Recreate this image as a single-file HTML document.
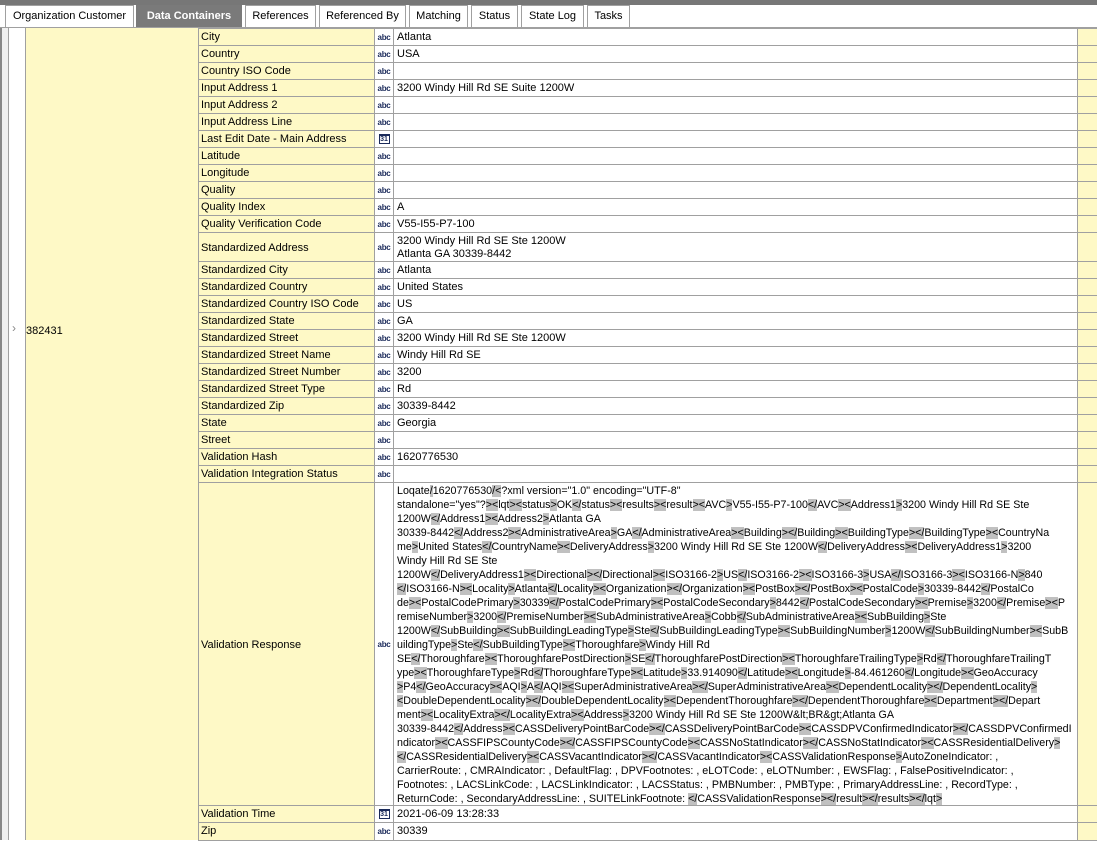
<!DOCTYPE html>
<html><head><meta charset="utf-8"><style>
*{margin:0;padding:0;box-sizing:border-box}
body{width:1097px;height:840px;overflow:hidden;background:#fff;font-family:"Liberation Sans",sans-serif;font-size:11px;color:#000;position:relative}
.topbar{position:absolute;left:0;top:0;width:1097px;height:5px;background:#777}
.tab{position:absolute;top:5px;height:22px;border:1px solid #a0a0a0;border-bottom:none;background:#fff;font-size:11px;line-height:20px;text-align:center;color:#000}
.tab.act{background:#7a7a7a;color:#fff;font-weight:bold;border-color:#7a7a7a}
.tabline{position:absolute;left:0;top:27px;width:1097px;height:1px;background:#a0a0a0}
.a{position:absolute}
.lbl{position:absolute;left:198px;width:176px;background:#fef9c6;border:1px solid #a0a0a0;border-right:none;padding-left:2px;padding-top:1px;line-height:15px;white-space:nowrap;overflow:hidden}
.ic{position:absolute;left:374px;width:19px;background:#fff;border:1px solid #a0a0a0;border-right:none;display:flex;align-items:center;justify-content:center}
.val{position:absolute;left:393px;width:684px;background:#fff;border:1px solid #a0a0a0;border-right:none;padding-left:3px;padding-top:1px;line-height:15px;white-space:nowrap;overflow:hidden}
.ry{position:absolute;left:1077px;width:20px;background:#fef9c6;border:1px solid #a0a0a0;border-right:none}
.abc{font-size:8px;font-weight:bold;color:#1a2a5a;letter-spacing:-0.3px;font-family:"Liberation Sans",sans-serif}
.cal{width:11px;height:10px;border:1px solid #1a2a5a;border-top-width:2px;font-size:7px;line-height:7px;text-align:center;color:#1a2a5a;font-weight:bold}
.vr{line-height:14px;padding-top:1px;font-size:10.7px}
.h{background:#c0c0c0}
</style></head><body>
<div class="topbar"></div>
<div class="tab" style="left:5px;width:129px">Organization Customer</div>
<div class="tab act" style="left:136px;width:106px">Data Containers</div>
<div class="tab" style="left:245px;width:71px">References</div>
<div class="tab" style="left:319px;width:87px">Referenced By</div>
<div class="tab" style="left:409px;width:59px">Matching</div>
<div class="tab" style="left:471px;width:47px">Status</div>
<div class="tab" style="left:521px;width:63px">State Log</div>
<div class="tab" style="left:587px;width:43px">Tasks</div>
<div class="tabline"></div>
<div class="a" style="left:0;top:28px;width:9px;height:812px;background:#f0f0f0;border-left:2px solid #888"></div>
<div class="a" style="left:8px;top:28px;width:18px;height:812px;background:#fff;border-left:1px solid #a0a0a0;border-right:1px solid #a0a0a0"></div>
<div class="a" style="left:12px;top:321px;font-size:12px;color:#888">&#x203A;</div>
<div class="a" style="left:26px;top:324px;width:172px;height:1px"></div>
<div class="a" style="left:26px;top:28px;width:172px;height:812px;background:#fef9c6"></div>
<div class="a" style="left:26px;top:324px;line-height:14px">382431</div>
<div id="rows"></div>
<script>
var rows=[["City","a","Atlanta",28,17],["Country","a","USA",45,17],["Country ISO Code","a","",62,17],["Input Address 1","a","3200 Windy Hill Rd SE Suite 1200W",79,17],["Input Address 2","a","",96,17],["Input Address Line","a","",113,17],["Last Edit Date - Main Address","c","",130,17],["Latitude","a","",147,17],["Longitude","a","",164,17],["Quality","a","",181,17],["Quality Index","a","A",198,17],["Quality Verification Code","a","V55-I55-P7-100",215,17],["Standardized Address","a","3200 Windy Hill Rd SE Ste 1200W<br>Atlanta GA 30339-8442",232,29],["Standardized City","a","Atlanta",261,17],["Standardized Country","a","United States",278,17],["Standardized Country ISO Code","a","US",295,17],["Standardized State","a","GA",312,17],["Standardized Street","a","3200 Windy Hill Rd SE Ste 1200W",329,17],["Standardized Street Name","a","Windy Hill Rd SE",346,17],["Standardized Street Number","a","3200",363,17],["Standardized Street Type","a","Rd",380,17],["Standardized Zip","a","30339-8442",397,17],["State","a","Georgia",414,17],["Street","a","",431,17],["Validation Hash","a","1620776530",448,17],["Validation Integration Status","a","",465,17],["Validation Response","a","VR",482,323],["Validation Time","c","2021-06-09 13:28:33",805,17],["Zip","a","30339",822,18]];
var vr=['Loqate/1620776530/<?xml version="1.0" encoding="UTF-8"',
'standalone="yes"?><lqt><status>OK</status><results><result><AVC>V55-I55-P7-100</AVC><Address1>3200 Windy Hill Rd SE Ste',
'1200W</Address1><Address2>Atlanta GA',
'30339-8442</Address2><AdministrativeArea>GA</AdministrativeArea><Building></Building><BuildingType></BuildingType><CountryNa',
'me>United States</CountryName><DeliveryAddress>3200 Windy Hill Rd SE Ste 1200W</DeliveryAddress><DeliveryAddress1>3200',
'Windy Hill Rd SE Ste',
'1200W</DeliveryAddress1><Directional></Directional><ISO3166-2>US</ISO3166-2><ISO3166-3>USA</ISO3166-3><ISO3166-N>840',
'</ISO3166-N><Locality>Atlanta</Locality><Organization></Organization><PostBox></PostBox><PostalCode>30339-8442</PostalCo',
'de><PostalCodePrimary>30339</PostalCodePrimary><PostalCodeSecondary>8442</PostalCodeSecondary><Premise>3200</Premise><P',
'remiseNumber>3200</PremiseNumber><SubAdministrativeArea>Cobb</SubAdministrativeArea><SubBuilding>Ste',
'1200W</SubBuilding><SubBuildingLeadingType>Ste</SubBuildingLeadingType><SubBuildingNumber>1200W</SubBuildingNumber><SubB',
'uildingType>Ste</SubBuildingType><Thoroughfare>Windy Hill Rd',
'SE</Thoroughfare><ThoroughfarePostDirection>SE</ThoroughfarePostDirection><ThoroughfareTrailingType>Rd</ThoroughfareTrailingT',
'ype><ThoroughfareType>Rd</ThoroughfareType><Latitude>33.914090</Latitude><Longitude>-84.461260</Longitude><GeoAccuracy',
'>P4</GeoAccuracy><AQI>A</AQI><SuperAdministrativeArea></SuperAdministrativeArea><DependentLocality></DependentLocality>',
'<DoubleDependentLocality></DoubleDependentLocality><DependentThoroughfare></DependentThoroughfare><Department></Depart',
'ment><LocalityExtra></LocalityExtra><Address>3200 Windy Hill Rd SE Ste 1200W&lt;BR&gt;Atlanta GA',
'30339-8442</Address><CASSDeliveryPointBarCode></CASSDeliveryPointBarCode><CASSDPVConfirmedIndicator></CASSDPVConfirmedI',
'ndicator><CASSFIPSCountyCode></CASSFIPSCountyCode><CASSNoStatIndicator></CASSNoStatIndicator><CASSResidentialDelivery>',
'</CASSResidentialDelivery><CASSVacantIndicator></CASSVacantIndicator><CASSValidationResponse>AutoZoneIndicator: ,',
'CarrierRoute: , CMRAIndicator: , DefaultFlag: , DPVFootnotes: , eLOTCode: , eLOTNumber: , EWSFlag: , FalsePositiveIndicator: ,',
'Footnotes: , LACSLinkCode: , LACSLinkIndicator: , LACSStatus: , PMBNumber: , PMBType: , PrimaryAddressLine: , RecordType: ,',
'ReturnCode: , SecondaryAddressLine: , SUITELinkFootnote: </CASSValidationResponse></result></results></lqt>'];
function esc(s){return s.replace(/&/g,'&amp;').replace(/</g,'&lt;').replace(/>/g,'&gt;');}
function hl(s,i){
  var out='';var re=/(>?<\/?|>)/g;var last=0,m;
  if(i==0){return 'Loqate<span class="h">/</span>1620776530<span class="h">/</span><span class="h">&lt;</span>?xml version="1.0" encoding="UTF-8"';}
  while((m=re.exec(s))){out+=esc(s.slice(last,m.index))+'<span class="h">'+esc(m[0])+'</span>';last=m.index+m[0].length;}
  return out+esc(s.slice(last));
}
var h='';
rows.forEach(function(r){
  var t=r[3],ht=r[4];
  var icon=r[1]=='a'?'<span class="abc">abc</span>':'<div class="cal">31</div>';
  var v=r[2]=='VR'?'<div class="vr">'+vr.map(hl).join('<br>')+'</div>':r[2];
  var lp=ht>20?'padding-top:'+(Math.round(ht/2)-7)+'px;':'';
  h+='<div class="lbl" style="top:'+t+'px;height:'+(ht+1)+'px;'+lp+'">'+r[0]+'</div>';
  h+='<div class="ic" style="top:'+t+'px;height:'+(ht+1)+'px">'+icon+'</div>';
  h+='<div class="val" style="top:'+t+'px;height:'+(ht+1)+'px;'+(ht==29?'line-height:13px;padding-top:2px':'')+(ht>100?'padding-top:0;':'')+'">'+v+'</div>';
  h+='<div class="ry" style="top:'+t+'px;height:'+(ht+1)+'px"></div>';
});
document.getElementById('rows').innerHTML=h;
</script>
</body></html>
